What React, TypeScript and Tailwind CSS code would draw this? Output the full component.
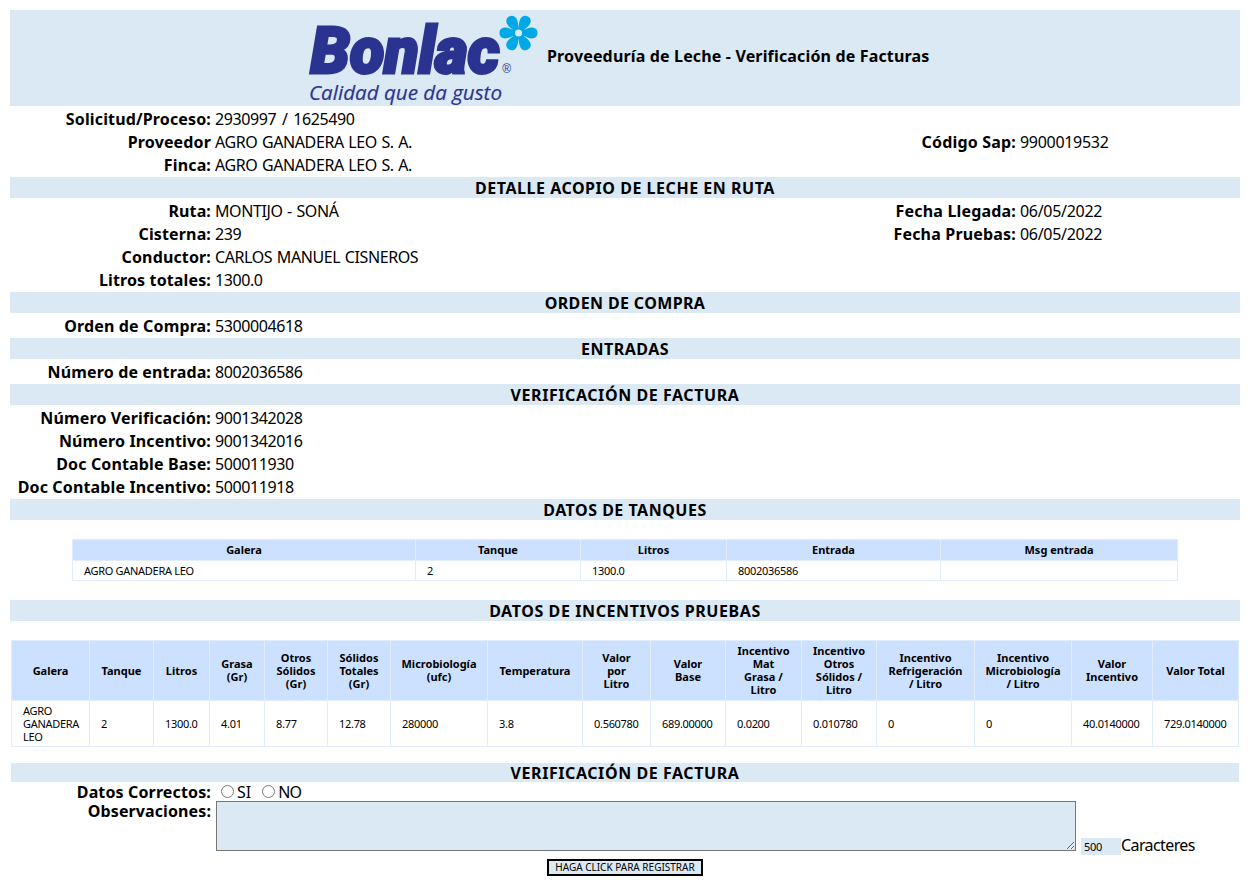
import React from 'react';

const PETALS = [0, 60, 120, 180, 240, 300];

function Logo() {
  return (
    <svg width="232" height="92" viewBox="308 13 232 92" className="block shrink-0 overflow-visible" role="img" aria-label="Bonlac">
      <text
        x="310.500"
        y="72.500"
        textLength="189"
        lengthAdjust="spacingAndGlyphs"
        fill="#2b3390"
        stroke="#2b3390"
        strokeWidth="3"
        className="font-['Roboto',sans-serif] text-[64px] font-black italic"
      >
        Bonlac
      </text>
      <text x="502.200" y="73" fill="#2b3390" className="font-['Liberation_Sans',sans-serif] text-[12px]">
        ®
      </text>
      <text
        x="309"
        y="100"
        textLength="193"
        lengthAdjust="spacingAndGlyphs"
        fill="#2b3390"
        stroke="#2b3390"
        strokeWidth="0.2"
        className="font-['Open_Sans',sans-serif] text-[20px] italic"
      >
        Calidad que da gusto
      </text>
      <g fill="#00a9e6">
        {PETALS.map((a) => (
          <path
            key={a}
            transform={`translate(518.500 33) rotate(${a})`}
            d="M2 0 L4 -2.500 C8 -4 10 -5.400 13.500 -5.400 C17 -5.400 19 -3 19 0 C19 3 17 5.400 13.500 5.400 C10 5.400 8 4 4 2.500Z"
          />
        ))}
        <circle cx="518.500" cy="33" r="5.500" />
      </g>
      <circle cx="518.500" cy="33" r="3.500" fill="#dceaf5" />
    </svg>
  );
}

function Bar({ children, spacing }: { children: string; spacing: string }) {
  return (
    <div className={`h-[21px] bg-[#dbe9f4] text-center text-[16px] leading-[23px] font-bold ${spacing}`}>{children}</div>
  );
}

type Field = [string, string, string?, string?];

function Row({ field }: { field: Field }) {
  const [label, value, label2, value2] = field;
  const numeric = /^[\d./ ]+$/.test(value);
  return (
    <div className="flex h-[21px] gap-1 leading-[23px] whitespace-nowrap">
      <div className="w-[201px] text-right font-bold tracking-[0.14px]">{label}</div>
      <div className={numeric ? 'w-[500px] tracking-[-0.41px] [word-spacing:2px]' : 'w-[500px] tracking-[-0.4px] [word-spacing:0.8px]'}>{value}</div>
      <div className="w-[297px] text-right font-bold tracking-[0.18px]">{label2}</div>
      <div className="tracking-[-0.3px]">{value2}</div>
    </div>
  );
}

type Column = { w: string; head: string[]; cell: string[] };

const TANKS: Column[] = [
  { w: 'w-[343px]', head: ['Galera'], cell: ['AGRO GANADERA LEO'] },
  { w: 'w-[165px]', head: ['Tanque'], cell: ['2'] },
  { w: 'w-[146px]', head: ['Litros'], cell: ['1300.0'] },
  { w: 'w-[214px]', head: ['Entrada'], cell: ['8002036586'] },
  { w: 'w-[238px]', head: ['Msg entrada'], cell: [''] },
];

const INCENTIVES: Column[] = [
  { w: 'w-[78px]', head: ['Galera'], cell: ['AGRO', 'GANADERA', 'LEO'] },
  { w: 'w-[64px]', head: ['Tanque'], cell: ['2'] },
  { w: 'w-[56px]', head: ['Litros'], cell: ['1300.0'] },
  { w: 'w-[55px]', head: ['Grasa', '(Gr)'], cell: ['4.01'] },
  { w: 'w-[63px]', head: ['Otros', 'Sólidos', '(Gr)'], cell: ['8.77'] },
  { w: 'w-[63px]', head: ['Sólidos', 'Totales', '(Gr)'], cell: ['12.78'] },
  { w: 'w-[97px]', head: ['Microbiología', '(ufc)'], cell: ['280000'] },
  { w: 'w-[95px]', head: ['Temperatura'], cell: ['3.8'] },
  { w: 'w-[68px]', head: ['Valor', 'por', 'Litro'], cell: ['0.560780'] },
  { w: 'w-[75px]', head: ['Valor', 'Base'], cell: ['689.00000'] },
  { w: 'w-[76px]', head: ['Incentivo', 'Mat', 'Grasa /', 'Litro'], cell: ['0.0200'] },
  { w: 'w-[75px]', head: ['Incentivo', 'Otros', 'Sólidos /', 'Litro'], cell: ['0.010780'] },
  { w: 'w-[98px]', head: ['Incentivo', 'Refrigeración', '/ Litro'], cell: ['0'] },
  { w: 'w-[97px]', head: ['Incentivo', 'Microbiología', '/ Litro'], cell: ['0'] },
  { w: 'w-[81px]', head: ['Valor', 'Incentivo'], cell: ['40.0140000'] },
  { w: 'w-[87px]', head: ['Valor Total'], cell: ['729.0140000'] },
];

type TableProps = { columns: Column[]; width: string; headH: string; cellH: string };

function DataTable({ columns, width, headH, cellH }: TableProps) {
  return (
    <table className={`${width} table-fixed border-separate border-spacing-0 text-[11px] leading-[13px] whitespace-nowrap`}>
      <thead>
        <tr className={headH}>
          {columns.map((c, i) => (
            <th key={i} className={`${c.w} border-t border-l border-[#e1eefa] bg-[#cce1ff] p-0 pb-px text-center align-middle font-bold last:border-r`}>
              {c.head.map((line, j) => (
                <div key={j}>{line}</div>
              ))}
            </th>
          ))}
        </tr>
      </thead>
      <tbody>
        <tr className={cellH}>
          {columns.map((c, i) => (
            <td key={i} className="border-y border-l border-[#e1eefa] p-0 pl-[11px] text-left align-middle tracking-[-0.3px] last:border-r">
              {c.cell.map((line, j) => (
                <div key={j}>{line}</div>
              ))}
            </td>
          ))}
        </tr>
      </tbody>
    </table>
  );
}

const GENERAL: Field[] = [
  ['Solicitud/Proceso:', '2930997 / 1625490'],
  ['Proveedor', 'AGRO GANADERA LEO S. A.', 'Código Sap:', '9900019532'],
  ['Finca:', 'AGRO GANADERA LEO S. A.'],
];

const ROUTE: Field[] = [
  ['Ruta:', 'MONTIJO - SONÁ', 'Fecha Llegada:', '06/05/2022'],
  ['Cisterna:', '239', 'Fecha Pruebas:', '06/05/2022'],
  ['Conductor:', 'CARLOS MANUEL CISNEROS'],
  ['Litros totales:', '1300.0'],
];

const INVOICE: Field[] = [
  ['Número Verificación:', '9001342028'],
  ['Número Incentivo:', '9001342016'],
  ['Doc Contable Base:', '500011930'],
  ['Doc Contable Incentivo:', '500011918'],
];

function Rows({ fields }: { fields: Field[] }) {
  return (
    <>
      {fields.map((f) => (
        <Row key={f[0]} field={f} />
      ))}
    </>
  );
}

export default function App() {
  return (
    <main className="h-[886px] w-[1257px] overflow-hidden bg-white pt-[10px] pl-[10px] font-['Noto_Sans',sans-serif] text-[16px] text-black">
      <div className="flex w-[1230px] flex-col gap-[2px]">
        <header className="flex h-24 items-center bg-[#dbe9f4] pl-[298px]">
          <div className="pt-[2px]">
            <Logo />
          </div>
          <h1 className="pb-1 pl-[7px] text-[16px] leading-[21px] font-bold tracking-[0.155px] whitespace-nowrap">
            Proveeduría de Leche - Verificación de Facturas
          </h1>
        </header>
        <Rows fields={GENERAL} />
        <Bar spacing="tracking-[0.53px]">DETALLE ACOPIO DE LECHE EN RUTA</Bar>
        <Rows fields={ROUTE} />
        <Bar spacing="tracking-[0.37px]">ORDEN DE COMPRA</Bar>
        <Row field={['Orden de Compra:', '5300004618']} />
        <Bar spacing="tracking-[0.5px]">ENTRADAS</Bar>
        <Row field={['Número de entrada:', '8002036586']} />
        <Bar spacing="tracking-[0.57px]">VERIFICACIÓN DE FACTURA</Bar>
        <Rows fields={INVOICE} />
        <Bar spacing="tracking-[0.5px]">DATOS DE TANQUES</Bar>
        <div className="pt-[17px] pb-[17px] pl-[62px]">
          <DataTable columns={TANKS} width="w-[1106px]" headH="h-[21px]" cellH="h-[21px]" />
        </div>
        <Bar spacing="tracking-[0.6px]">DATOS DE INCENTIVOS PRUEBAS</Bar>
        <div className="pt-[17px] pl-px">
          <DataTable columns={INCENTIVES} width="w-[1228px]" headH="h-[60px]" cellH="h-[47px]" />
        </div>
      </div>

      <form className="mt-4 ml-px w-[1228px]" onSubmit={(e) => e.preventDefault()}>
        <div className="h-[19px] bg-[#dbe9f4] text-center leading-[20px] font-bold tracking-[0.57px]">VERIFICACIÓN DE FACTURA</div>
        <div className="flex h-[19px] leading-[20px]">
          <div className="w-[200px] text-right font-bold tracking-[0.14px]">Datos Correctos:</div>
          <label className="ml-[10px] flex items-center">
            <input type="radio" name="ok" className="m-0 mr-[3px] size-[13px]" />
            SI
          </label>
          <label className="ml-[11px] flex items-center tracking-[-0.8px]">
            <input type="radio" name="ok" className="m-0 mr-[3px] size-[13px]" />
            NO
          </label>
        </div>
        <div className="flex h-[58px] items-start">
          <div className="w-[200px] text-right leading-[20px] font-bold tracking-[0.1px]">Observaciones:</div>
          <textarea className="ml-[5px] h-[50px] w-[860px] resize border border-[#767676] bg-[#dbe9f4]" />
          <div className="ml-[5px] flex items-start pt-[37px]">
            <div className="h-[17px] w-10 bg-[#dbe9f4] pl-[3px] text-[11px] leading-[18px] tracking-[-0.3px]">500</div>
            <div className="-mt-[3px] leading-[21px] tracking-[-0.6px]">Caracteres</div>
          </div>
        </div>
        <div className="flex justify-center">
          <button
            type="button"
            className="h-[17px] w-[156px] border-2 border-black bg-[#dbe9f4] p-0 text-[10px] leading-[13px] whitespace-nowrap"
          >
            HAGA CLICK PARA REGISTRAR
          </button>
        </div>
      </form>
    </main>
  );
}
